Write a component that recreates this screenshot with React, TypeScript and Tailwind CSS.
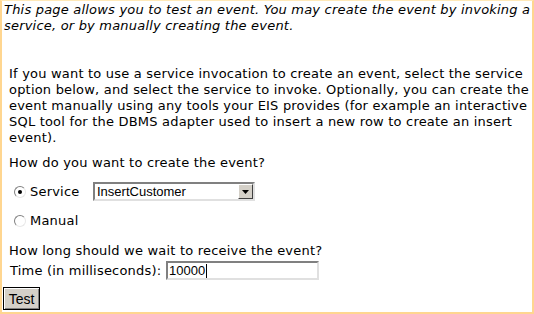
import React from 'react';

const Radio: React.FC<{ checked?: boolean }> = ({ checked }) => (
  <span className="relative inline-block h-[12px] w-[12px] shrink-0 rounded-full border border-t-[#808080] border-l-[#808080] border-r-[#e8e8e8] border-b-[#e8e8e8] bg-white">
    {checked && (
      <span className="absolute left-[3px] top-[3px] h-[4px] w-[4px] rounded-full bg-black" />
    )}
  </span>
);

const App: React.FC = () => {
  return (
    <div
      className="h-[314px] w-[534px] overflow-hidden border-t border-l-2 border-r-2 border-b-2 border-t-[#ffe9b8] border-l-[#ffd690] border-r-[#ffd690] border-b-[#ffd690] bg-white text-[13px] leading-[16px] tracking-[0.2px] text-black"
      style={{ fontFamily: '"DejaVu Sans", Verdana, sans-serif' }}
    >
      {/* Intro */}
      <p className="whitespace-nowrap pl-[2px] pt-[1px] italic">
        This page allows you to test an event. You may create the event by invoking a
        <br />
        service, or by manually creating the event.
      </p>

      {/* Explanation */}
      <p className="mt-[32px] whitespace-nowrap pl-[7px]">
        If you want to use a service invocation to create an event, select the service
        <br />
        option below, and select the service to invoke. Optionally, you can create the
        <br />
        event manually using any tools your EIS provides (for example an interactive
        <br />
        SQL tool for the DBMS adapter used to insert a new row to create an insert
        <br />
        event).
      </p>

      <p className="mt-[9px] pl-[7px]">How do you want to create the event?</p>

      {/* Service option */}
      <div className="mt-[11px] flex items-center pl-[12px]">
        <Radio checked />
        <span className="ml-[4px] w-[63px]">Service</span>
        <div
          className="flex h-[19px] w-[162px] items-center border-2 border-t-[#808080] border-l-[#808080] border-r-[#e0e0e0] border-b-[#e0e0e0] bg-white tracking-normal"
          style={{ fontFamily: '"Liberation Sans", Arial, sans-serif' }}
        >
          <span className="flex-1 pl-[2px] text-[13px] leading-[15px]">InsertCustomer</span>
          <span className="flex h-[15px] w-[15px] items-center justify-center border border-t-[#ffffff] border-l-[#ffffff] border-r-[#404040] border-b-[#404040] bg-[#d4d0c8]">
            <svg width="7" height="4" viewBox="0 0 7 4">
              <path d="M0 0 H7 L3.5 4 Z" fill="#000" />
            </svg>
          </span>
        </div>
      </div>

      {/* Manual option */}
      <div className="mt-[12px] flex items-center pl-[12px]">
        <Radio />
        <span className="ml-[4px]">Manual</span>
      </div>

      <p className="mt-[14px] pl-[7px]">How long should we wait to receive the event?</p>

      <div className="mt-[2px] flex items-center pl-[8px]">
        <span className="w-[156px] shrink-0 whitespace-nowrap">Time (in milliseconds):</span>
        <div
          className="flex h-[19px] w-[153px] items-center border-2 border-t-[#808080] border-l-[#808080] border-r-[#e0e0e0] border-b-[#e0e0e0] bg-white pl-[1px] text-[13px] tracking-normal"
          style={{ fontFamily: '"Liberation Sans", Arial, sans-serif' }}
        >
          10000
          <span className="ml-[1px] h-[14px] w-px bg-black" />
        </div>
      </div>

      <div className="mt-[7px] pl-[1px]">
        <button
          className="h-[23px] w-[37px] border border-black bg-[#d4d0c8] text-[14px] leading-[16px] tracking-normal shadow-[inset_1px_1px_0_#ffffff,inset_-1px_-1px_0_#808080]"
          style={{ fontFamily: '"Liberation Sans", Arial, sans-serif' }}
        >
          Test
        </button>
      </div>
    </div>
  );
};

export default App;
